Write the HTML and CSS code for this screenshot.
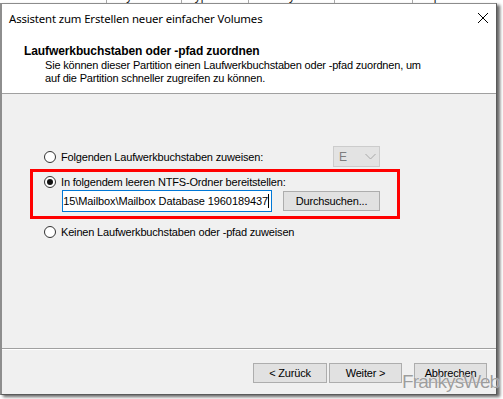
FILE: index.html
```html
<!DOCTYPE html>
<html lang="de">
<head>
<meta charset="utf-8">
<title>Assistent zum Erstellen neuer einfacher Volumes</title>
<link rel="stylesheet" href="styles.css">
</head>
<body>
<div class="bgstrip">
  <div class="bgcell c1"><span>Volume</span></div>
  <div class="bgcell c2"><span>Layout</span></div>
  <div class="bgcell c3"><span>Typ</span></div>
  <div class="bgcell c4"><span>Dateisystem</span></div>
  <div class="bgcell c5"><span>Status</span></div>
  <div class="bgcell c6"><span>Kapazität</span></div>
</div>
<div class="window">
  <div class="top">
    <div class="titlebar">
      <span class="title">Assistent zum Erstellen neuer einfacher Volumes</span>
      <svg class="close" width="12" height="12" viewBox="0 0 12 12"><path d="M1 1 L11 11 M11 1 L1 11" stroke="#000" stroke-width="1" fill="none"/></svg>
    </div>
    <div class="header">
      <div class="h-title">Laufwerkbuchstaben oder -pfad zuordnen</div>
      <div class="h-sub">Sie können dieser Partition einen Laufwerkbuchstaben oder -pfad zuordnen, um<br>auf die Partition schneller zugreifen zu können.</div>
    </div>
  </div>
  <div class="content">
    <div class="row row1">
      <label class="opt"><span class="radio"></span><span>Folgenden Laufwerkbuchstaben zuweisen:</span></label>
      <div class="combo"><span class="combo-val">E</span><svg width="11" height="7" viewBox="0 0 11 7"><path d="M0.5 1 L5.5 6 L10.5 1" stroke="#a8a8a8" stroke-width="1" fill="none"/></svg></div>
    </div>
    <div class="redbox">
      <label class="opt row"><span class="radio checked"></span><span>In folgendem leeren NTFS-Ordner bereitstellen:</span></label>
      <div class="pathrow">
        <div class="input"><span class="input-text">15\Mailbox\Mailbox Database 1960189437</span><span class="caret"></span></div>
        <div class="btn browse">Durchsuchen...</div>
      </div>
    </div>
    <div class="row row3">
      <label class="opt"><span class="radio"></span><span>Keinen Laufwerkbuchstaben oder -pfad zuweisen</span></label>
    </div>
  </div>
  <div class="footer">
    <div class="footer-inner">
      <div class="btn navbtn">&lt; Zurück</div>
      <div class="btn navbtn next">Weiter &gt;</div>
      <div class="btn navbtn cancel">Abbrechen</div>
    </div>
  </div>
</div>
<div class="watermark">FrankysWeb</div>
</body>
</html>
```

FILE: styles.css
```css
html, body {
  margin: 0;
  padding: 0;
  background: #ffffff;
  width: 503px;
  height: 399px;
  overflow: hidden;
}

body {
  font-family: "Liberation Sans", Arial, sans-serif;
  font-size: 11px;
  color: #000;
  position: relative;
}

.bgstrip {
  display: flex;
  height: 3px;
  overflow: hidden;
  background: #fff;
}

.bgcell {
  height: 3px;
  border-right: 1px solid #a8a8a8;
  box-sizing: border-box;
  overflow: hidden;
  font-size: 12px;
  line-height: 12px;
  color: #222;
}

.bgcell span {
  display: block;
  margin-top: -10px;
  padding-left: 6px;
}

.c1 { width: 107px; }
.c1 span { margin-left: -22px; }
.c2 { width: 75px; }
.c3 { width: 67px; }
.c4 { width: 86px; }
.c5 { width: 78px; }
.c6 { flex: 1; border-right: none; }

.window {
  width: 497px;
  box-sizing: border-box;
  border-top: 1px solid #8c8c8c;
  border-left: 2px solid #8e8e8e;
  border-right: 1px solid #5a5a5a;
  border-bottom: 1px solid #5a5a5a;
  background: #f0f0f0;
  box-shadow: 3px 2px 3px rgba(0, 0, 0, 0.6);
}

.top {
  background: #fff;
}

.titlebar {
  height: 30px;
  display: flex;
  align-items: center;
  justify-content: space-between;
  padding: 0 7px 0 7px;
}

.title {
  font-family: "Noto Sans", "Open Sans", sans-serif;
  font-size: 11.4px;
  letter-spacing: -0.15px;
  line-height: 30px;
  margin-top: -1px;
}

.close {
  margin-right: 0;
  margin-top: -2px;
}

.header {
  padding: 10px 0 8px 22px;
  border-bottom: 1px solid #a0a0a0;
}

.h-title {
  font-weight: bold;
  font-size: 12px;
  letter-spacing: -0.1px;
  line-height: 14px;
}

.h-sub {
  margin-top: 1px;
  padding-left: 21px;
  line-height: 13px;
  letter-spacing: -0.18px;
}

.content {
  height: 254px;
  box-sizing: border-box;
  padding: 52px 0 0 42px;
}

.row {
  display: flex;
  align-items: center;
  height: 16px;
}

.row1 {
  width: 336px;
  height: 21px;
  justify-content: space-between;
}

.opt {
  display: flex;
  align-items: center;
  letter-spacing: -0.17px;
  line-height: 16px;
}

.radio {
  width: 12px;
  height: 12px;
  box-sizing: border-box;
  border: 1px solid #333;
  border-radius: 50%;
  background: #fff;
  margin-right: 5px;
  display: flex;
  align-items: center;
  justify-content: center;
}

.radio.checked::after {
  content: "";
  width: 6px;
  height: 6px;
  border-radius: 50%;
  background: #111;
}

.combo {
  width: 47px;
  height: 21px;
  box-sizing: border-box;
  border: 1px solid #cccccc;
  background: #e3e3e3;
  display: flex;
  align-items: center;
  justify-content: space-between;
  padding: 0 3px 0 5px;
}

.combo-val {
  color: #7d7d7d;
  font-size: 12px;
}

.redbox {
  margin: 2px 0 0 -14px;
  width: 370px;
  height: 50px;
  box-sizing: border-box;
  border: 3px solid #ff0000;
  padding: 2px 0 0 11px;
}

.pathrow {
  display: flex;
  align-items: center;
  height: 22px;
  margin-left: 18px;
}

.input {
  width: 210px;
  height: 22px;
  box-sizing: border-box;
  border: 1px solid #0078d7;
  background: #fff;
  display: flex;
  align-items: center;
  justify-content: flex-end;
  overflow: hidden;
  padding-right: 2px;
  white-space: nowrap;
  letter-spacing: -0.1px;
  font-size: 11px;
}

.caret {
  width: 1px;
  height: 14px;
  background: #000;
  margin-left: 0;
  flex: none;
}

.btn {
  box-sizing: border-box;
  height: 20px;
  border: 1px solid #adadad;
  background: #e1e1e1;
  display: flex;
  align-items: center;
  justify-content: center;
  letter-spacing: -0.17px;
}

.browse {
  width: 97px;
  margin-left: 11px;
}

.row3 {
  margin-top: 5px;
}

.footer {
  border-top: 1px solid #a0a0a0;
}

.footer-inner {
  border-top: 1px solid #fff;
  height: 45px;
  box-sizing: border-box;
  display: flex;
  justify-content: flex-end;
  padding: 13px 9px 0 0;
}

.navbtn {
  width: 74px;
}

.next {
  margin-left: 2px;
  width: 73px;
}

.cancel {
  margin-left: 12px;
  width: 73px;
}

.watermark {
  position: absolute;
  left: 402px;
  top: 370px;
  font-family: "Liberation Sans", Arial, sans-serif;
  font-size: 19px;
  letter-spacing: -0.9px;
  color: rgba(140, 140, 140, 0.85);
  text-shadow: 0 0 1px #fff;
  line-height: 24px;
}
```
